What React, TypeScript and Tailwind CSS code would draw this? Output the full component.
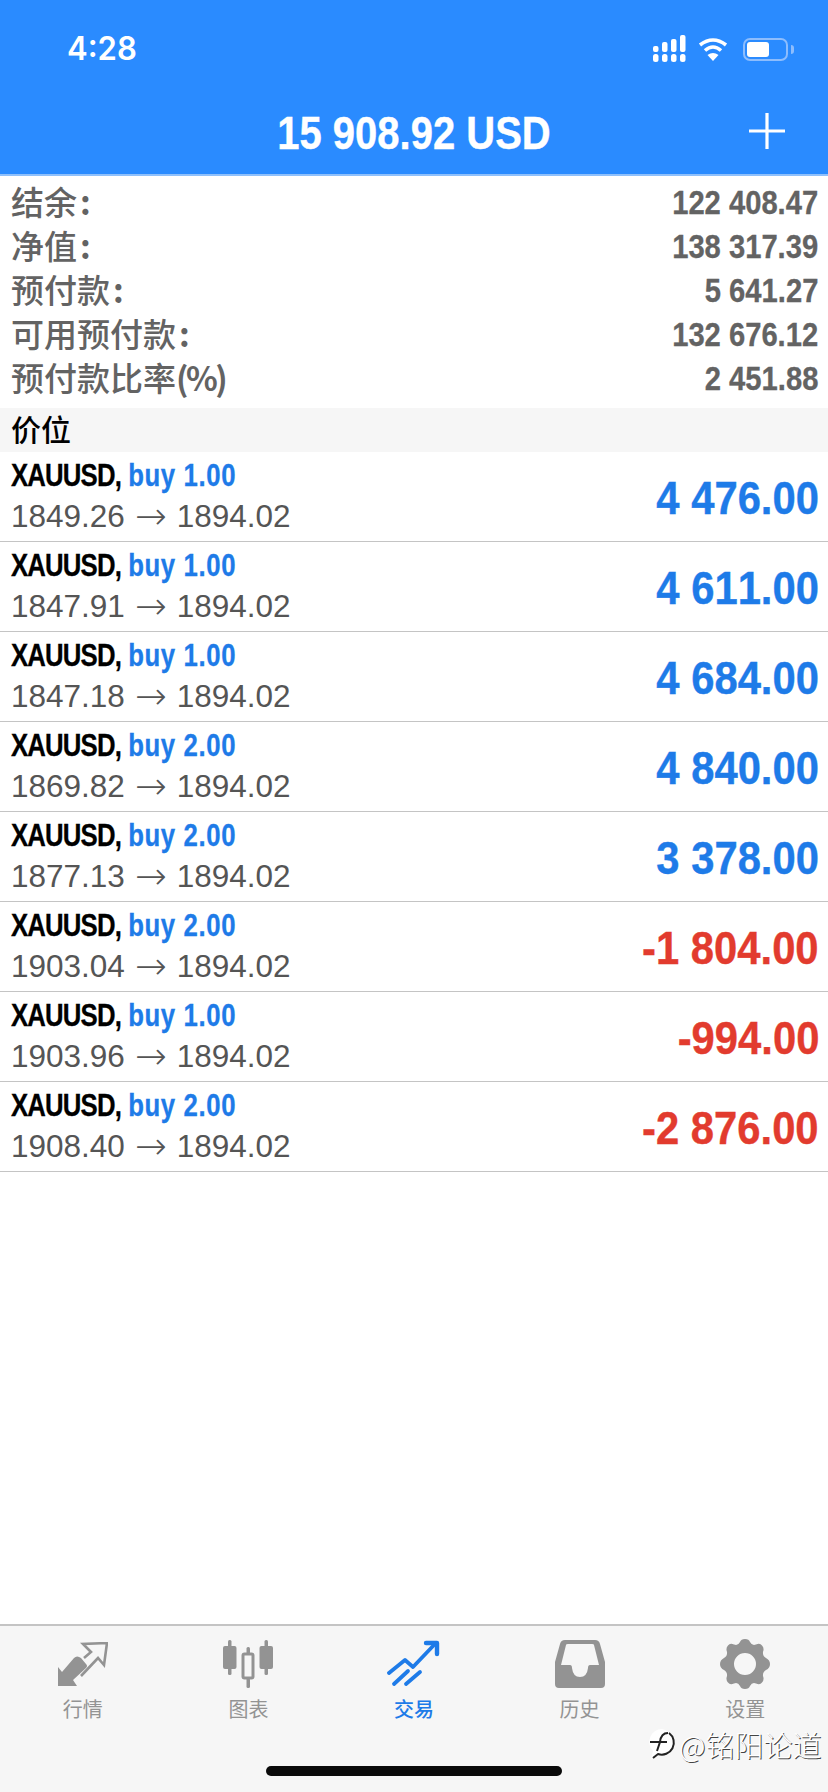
const sans = "font-['Liberation_Sans','Noto_Sans_CJK_SC',sans-serif]";

const summary = [
  { label: "结余", colon: true, value: "122 408.47" },
  { label: "净值", colon: true, value: "138 317.39" },
  { label: "预付款", colon: true, value: "5 641.27" },
  { label: "可用预付款", colon: true, value: "132 676.12" },
  { label: "预付款比率", colon: false, value: "2 451.88" },
];

const positions = [
  { lots: "1.00", open: "1849.26", profit: "4 476.00" },
  { lots: "1.00", open: "1847.91", profit: "4 611.00" },
  { lots: "1.00", open: "1847.18", profit: "4 684.00" },
  { lots: "2.00", open: "1869.82", profit: "4 840.00" },
  { lots: "2.00", open: "1877.13", profit: "3 378.00" },
  { lots: "2.00", open: "1903.04", profit: "-1 804.00" },
  { lots: "1.00", open: "1903.96", profit: "-994.00" },
  { lots: "2.00", open: "1908.40", profit: "-2 876.00" },
];

const QuotesIcon = () => (
  <svg width="50" height="45" viewBox="0 0 50 45" fill="#939393">
    <path d="M0 44 L0 25 L4 30 L16 16 Q19 13 23 16 L28 22 Q30 24 28 26 L15 38 L19 44 Z" />
    <path d="M26 16 L33 10 L25 2 L49 1 L46 23 L40 16 L23 34" fill="none" stroke="#939393" strokeWidth="2.6" />
  </svg>
);

const ChartIcon = () => (
  <svg width="50" height="48" viewBox="0 0 50 48" fill="#939393">
    <rect x="0" y="6" width="13.5" height="23" rx="2" />
    <rect x="5" y="0" width="3.5" height="35" rx="1.5" />
    <rect x="36.5" y="6" width="13.5" height="23" rx="2" />
    <rect x="41.500" y="0" width="3.5" height="35" rx="1.5" />
    <rect x="20" y="14" width="10" height="24" rx="1.5" fill="none" stroke="#939393" strokeWidth="3" />
    <rect x="23.500" y="7" width="3.5" height="7" rx="1.5" />
    <rect x="23.500" y="38" width="3.5" height="10" rx="1.5" />
  </svg>
);

const TradeIcon = () => (
  <svg width="54" height="48" viewBox="0 0 54 48" fill="none" stroke="#1e7be8" strokeWidth="3.8" strokeLinecap="round" strokeLinejoin="round">
    <path d="M2 33 L18 20 L26 27 L47 5" />
    <path d="M39 3 H50 V14" strokeWidth="4.4" />
    <path d="M7 44 L21 31" />
    <path d="M19 44 L33 32" />
  </svg>
);

const HistoryIcon = () => (
  <svg width="50" height="48" viewBox="0 0 50 48" fill="#939393">
    <path fillRule="evenodd" d="M10 0 H40 Q44 0 45 4 L50 22 V44 Q50 48 46 48 H4 Q0 48 0 44 V22 L5 4 Q6 0 10 0 Z M11 5 L6 25 H15 Q17 25 17 28 Q18 37 25 37 Q32 37 33 28 Q33 25 35 25 H44 L39 5 Q39 4 37 4 H13 Q11 4 11 5 Z" />
  </svg>
);

const GearIcon = () => (
  <svg width="50" height="50" viewBox="0 0 50 50" fill="#939393">
    <path
      fillRule="evenodd"
      d="M25 0 Q29 0 30 3 Q32 7 36 5.5 Q40 3.5 42 6.5 Q44.5 9 43 13 Q42.5 17 46 19 Q50 21 50 25 Q50 29 46 31 Q42.5 33 43 37 Q44.5 41 42 43.5 Q40 46.500 36 44.5 Q32 43 30 47 Q29 50 25 50 Q21 50 20 47 Q18 43 14 44.5 Q10 46.500 8 43.500 Q5.500 41 7 37 Q7.500 33 4 31 Q0 29 0 25 Q0 21 4 19 Q7.500 17 7 13 Q5.500 9 8 6.500 Q10 3.500 14 5.500 Q18 7 20 3 Q21 0 25 0 Z M25 14 A11 11 0 1 0 25 36 A11 11 0 1 0 25 14 Z"
    />
  </svg>
);

const tabs = [
  { label: "行情", Icon: QuotesIcon },
  { label: "图表", Icon: ChartIcon },
  { label: "交易", Icon: TradeIcon, active: true },
  { label: "历史", Icon: HistoryIcon },
  { label: "设置", Icon: GearIcon },
];

const StatusIcons = () => (
  <div className="flex items-center">
    <svg width="34" height="28" viewBox="0 0 34 28" fill="white">
      <rect x="1" y="19" width="5.5" height="8" rx="2.5" />
      <rect x="1" y="11" width="5.5" height="6" rx="2" />
      <rect x="10" y="19" width="5.5" height="8" rx="2.5" />
      <rect x="10" y="7" width="5.5" height="10" rx="2" />
      <rect x="19" y="19" width="5.5" height="8" rx="2.5" />
      <rect x="19" y="4" width="5.5" height="13" rx="2" />
      <rect x="28" y="19" width="5.5" height="8" rx="2.5" />
      <rect x="28" y="0" width="5.5" height="17" rx="2" />
    </svg>
    <svg className="ml-[12px]" width="30" height="24" viewBox="0 0 30 24" fill="none" stroke="white" strokeWidth="3.6">
      <path d="M2 8 Q15 -2 28 8" />
      <path d="M7 13.500 Q15 6.500 23 13.500" />
      <path d="M15 24 L9.500 18 Q15 14 20.500 18 Z" fill="white" stroke="none" />
    </svg>
    <div className="flex items-center gap-[3px] ml-[15px]">
      <div className="w-[45px] h-[23px] rounded-[7px] border-2 border-[#8dbdfd] p-[2px]">
        <div className="w-[22px] h-full rounded-[3px] bg-white" />
      </div>
      <div className="w-[3px] h-[9px] rounded-r-full bg-[#8dbdfd]" />
    </div>
  </div>
);

export default function App() {
  return (
    <div className={`relative flex flex-col w-[828px] h-[1792px] bg-white overflow-hidden [font-kerning:none] ${sans}`}>
      <header className="relative shrink-0 h-[176px] bg-[#2a8bff] border-b-2 border-[#8fc0fb] text-white">
        <div className="flex items-center justify-between pl-[67px] pr-[34px] pt-[29px]">
          <span className="text-[32px] leading-[40px] font-['Inter',sans-serif] font-semibold origin-left scale-x-[0.97]">4:28</span>
          <StatusIcons />
        </div>
        <div className="absolute left-0 right-0 top-[108px] text-center text-[47px] leading-[50px] font-bold scale-x-[0.851] [-webkit-text-stroke:0.4px_white]">
          15 908.92 USD
        </div>
        <svg className="absolute left-[749px] top-[113px]" width="36" height="36" viewBox="0 0 36 36" stroke="white" strokeWidth="3.200">
          <path d="M18 0 V36 M0 18 H36" />
        </svg>
      </header>

      <section className="shrink-0 h-[232px] pt-[4px] pl-[11px] pr-[10px] text-[#636363]">
        {summary.map((row) => (
          <div key={row.label} className="flex items-center justify-between h-[44px]">
            <span className="pb-[3px] text-[33px] leading-[44px] font-medium font-['Noto_Sans_CJK_SC',sans-serif] whitespace-nowrap">
              {row.label}
              {row.colon ? (
                <span className="ml-[3px] font-bold">:</span>
              ) : (
                <span className="tracking-[-2.5px] font-bold">(%)</span>
              )}
            </span>
            <span className="text-[34px] leading-[44px] font-bold origin-right scale-x-[0.858] [-webkit-text-stroke:0.3px_#636363]">{row.value}</span>
          </div>
        ))}
      </section>

      <div className="shrink-0 h-[44px] px-[11px] bg-[#f6f6f6] text-[30px] leading-[41px] font-medium text-black font-['Noto_Sans_CJK_SC',sans-serif]">
        价位
      </div>

      <main className="flex-1">
        {positions.map((p) => (
          <div key={p.open} className="flex items-center justify-between h-[90px] pl-[11px] pr-[9px] border-b-[1.5px] border-[#c4c4c4]">
            <div className="-mt-[2px]">
              <div className="text-[31px] leading-[40px] font-bold origin-left scale-x-[0.83] whitespace-nowrap text-black [-webkit-text-stroke:0.3px_black]">
                <span className="tracking-[-1px]">XAUUSD,</span>{" "}
                <span className="tracking-[0.75px] text-[#1e7be8] [-webkit-text-stroke:0.3px_#1e7be8]">buy {p.lots}</span>
              </div>
              <div className="flex items-center h-[40px] text-[31.500px] leading-[40px] text-[#555555] whitespace-nowrap">
                <span>{p.open}</span>
                <span className="mx-[10px] text-[38px] leading-[40px] font-['DejaVu_Sans',sans-serif] font-extralight">→</span>
                <span>1894.02</span>
              </div>
            </div>
            <div className={`mt-[2px] text-[47px] leading-[60px] font-bold origin-right scale-x-[0.889] ${p.profit.startsWith("-") ? "text-[#e23b2e] [-webkit-text-stroke:0.4px_#e23b2e]" : "text-[#1e7be8] [-webkit-text-stroke:0.4px_#1e7be8]"}`}>
              {p.profit}
            </div>
          </div>
        ))}
      </main>

      <footer className="shrink-0 h-[168px] bg-[#f6f6f6] border-t-2 border-[#c4c4c4]">
        <nav className="grid grid-cols-5 pt-[12px]">
          {tabs.map(({ label, Icon, active }) => (
            <div key={label} className="flex flex-col items-center">
              <div className="h-[52px] flex items-center justify-center">
                <Icon />
              </div>
              <span className={`mt-[5px] text-[20px] leading-[28px] font-['Noto_Sans_CJK_SC',sans-serif] ${active ? "text-[#1e7be8] font-medium" : "text-[#939393]"}`}>
                {label}
              </span>
            </div>
          ))}
        </nav>
      </footer>

      <div className="absolute left-[266px] bottom-[16px] w-[296px] h-[10px] rounded-full bg-[#0a0a0a]" />

      <div className="absolute left-[647px] top-[1728px] flex items-center gap-[2px] text-white text-[29px] leading-[28px] font-light font-['Noto_Sans_CJK_SC',sans-serif] [text-shadow:1px_1px_0_#444]">
        <svg width="30" height="32" viewBox="0 0 30 32" fill="white" stroke="#222" strokeWidth="2">
          <path d="M15 1 A13 13 0 1 1 10 27 L4 31 L6 23 A13 13 0 0 1 15 1 Z" stroke="none" />
          <path d="M22 5 A12 12 0 0 1 11 26 L6 30 M3 14 H20 M21 5 Q14 5 13 14 L10 23" fill="none" />
        </svg>
        <span>@铭阳论道</span>
      </div>
    </div>
  );
}
